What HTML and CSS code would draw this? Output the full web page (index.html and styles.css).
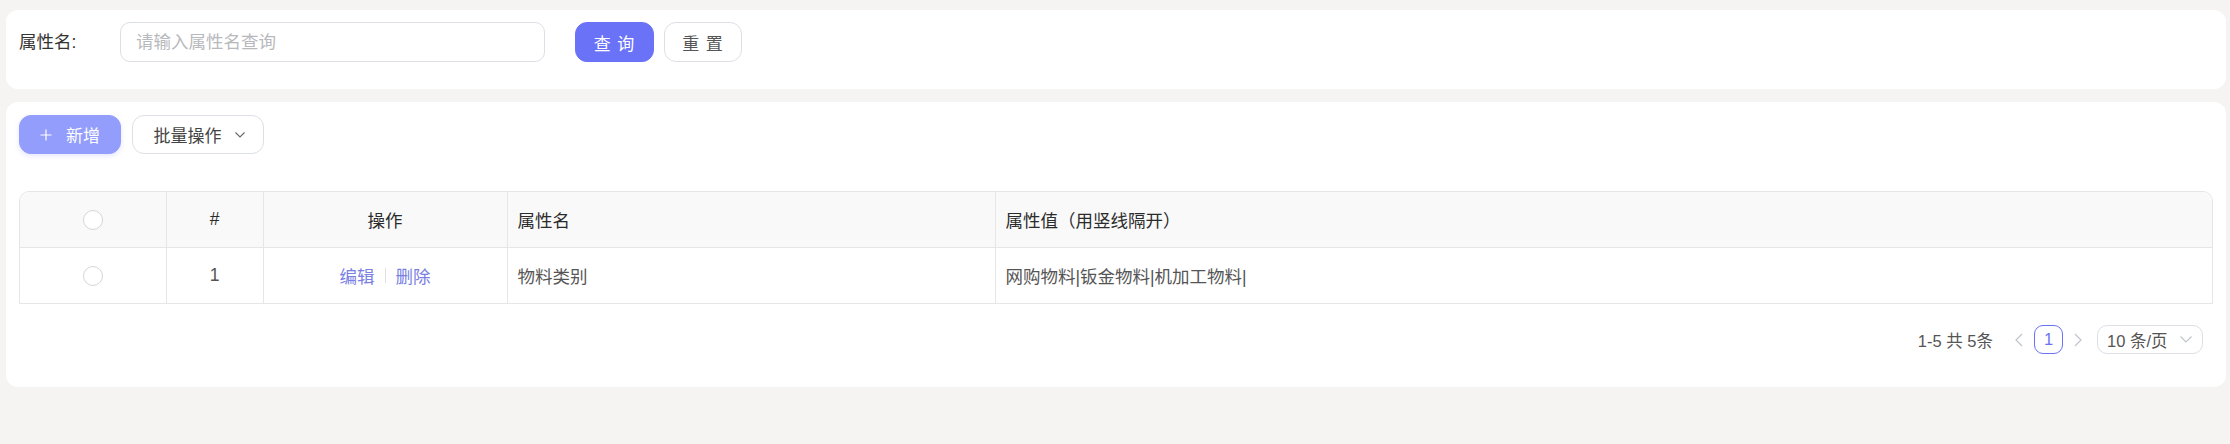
FILE: index.html
```html
<!DOCTYPE html>
<html lang="zh-CN">
<head>
<meta charset="utf-8">
<title>属性管理</title>
<link rel="stylesheet" href="styles.css">
</head>
<body>
<div class="page">
  <section class="card search-card">
    <div class="form-item">
      <label class="form-label">属性名:</label>
      <input class="text-input" type="text" placeholder="请输入属性名查询">
    </div>
    <div class="form-actions">
      <button class="btn btn-primary">查 询</button>
      <button class="btn btn-default">重 置</button>
    </div>
  </section>

  <section class="card list-card">
    <div class="toolbar">
      <button class="btn btn-add">
        <svg class="icon-plus" viewBox="0 0 12 12" width="12" height="12"><path d="M6 0.5V11.5M0.5 6H11.5" stroke="#fff" stroke-width="1.2" fill="none"/></svg>
        <span>新增</span>
      </button>
      <button class="btn btn-default btn-batch">
        <span>批量操作</span>
        <svg class="icon-chevron" viewBox="0 0 10 6" width="10" height="6"><path d="M0.5 0.5L5 5L9.5 0.5" stroke="#666" stroke-width="1.1" fill="none"/></svg>
      </button>
    </div>

    <div class="table-wrap">
      <table class="data-table">
        <colgroup>
          <col class="col-check">
          <col class="col-index">
          <col class="col-ops">
          <col class="col-name">
          <col>
        </colgroup>
        <thead>
          <tr>
            <th class="center"><span class="radio"></span></th>
            <th class="center">#</th>
            <th class="center">操作</th>
            <th>属性名</th>
            <th>属性值（用竖线隔开）</th>
          </tr>
        </thead>
        <tbody>
          <tr>
            <td class="center"><span class="radio"></span></td>
            <td class="center">1</td>
            <td class="center ops"><a class="link">编辑</a><span class="sep"></span><a class="link">删除</a></td>
            <td>物料类别</td>
            <td>网购物料|钣金物料|机加工物料|</td>
          </tr>
        </tbody>
      </table>
    </div>

    <div class="pagination">
      <span class="total">1-5 共 5条</span>
      <button class="pg-btn prev"><svg viewBox="0 0 8 14" width="8" height="14"><path d="M7 1L1 7L7 13" stroke="#c0c4cc" stroke-width="1.2" fill="none"/></svg></button>
      <span class="pager active">1</span>
      <button class="pg-btn next"><svg viewBox="0 0 8 14" width="8" height="14"><path d="M1 1L7 7L1 13" stroke="#c0c4cc" stroke-width="1.2" fill="none"/></svg></button>
      <div class="size-select">
        <span>10 条/页</span>
        <svg viewBox="0 0 12 7" width="12" height="7"><path d="M0.5 0.5L6 6L11.5 0.5" stroke="#c0c4cc" stroke-width="1.1" fill="none"/></svg>
      </div>
    </div>
  </section>
</div>
</body>
</html>
```

FILE: styles.css
```css
* { box-sizing: border-box; }

html, body {
  margin: 0;
  padding: 0;
}

body {
  background: #f5f4f2;
  font-family: "Liberation Sans", "Noto Sans CJK SC", sans-serif;
  font-size: 17.5px;
  color: #333;
  width: 2230px;
  height: 444px;
  overflow: hidden;
}

.page {
  display: flex;
  flex-direction: column;
  gap: 13px;
  padding: 10px 4px 0 6px;
}

.card {
  background: #fff;
  border-radius: 12px;
}

/* search card */
.search-card {
  display: flex;
  align-items: center;
  padding: 12px 13px 27px;
}

.form-item {
  display: flex;
  align-items: center;
}

.form-label {
  width: 101px;
  font-size: 17.5px;
  color: #333;
  line-height: 40px;
}

.text-input {
  width: 425px;
  height: 40px;
  border: 1px solid #dcdfe6;
  border-radius: 10px;
  padding: 0 15px;
  font-family: inherit;
  font-size: 17.5px;
  color: #333;
  outline: none;
  background: #fff;
}

.text-input::placeholder {
  color: #b8b9bd;
}

.form-actions {
  display: flex;
  gap: 10px;
  margin-left: 30px;
}

.btn {
  display: inline-flex;
  align-items: center;
  justify-content: center;
  height: 40px;
  border-radius: 12px;
  font-family: inherit;
  font-size: 17px;
  border: 1px solid #dcdfe6;
  background: #fff;
  color: #555;
  padding: 0;
  cursor: pointer;
}

.btn-primary {
  width: 79px;
  background: #6a72f7;
  border-color: #6a72f7;
  color: #fff;
  letter-spacing: 1px;
}

.btn-default {
  width: 78px;
  letter-spacing: 1px;
}

/* list card */
.list-card {
  padding: 13px 13px 33px;
}

.toolbar {
  display: flex;
  gap: 11px;
}

.btn-add {
  width: 102px;
  height: 39px;
  background: #939dfc;
  border-color: #939dfc;
  color: #fff;
  gap: 14px;
  box-shadow: 0 2px 5px rgba(110, 120, 240, 0.18);
}

.btn-add .icon-plus {
  width: 12px;
  height: 12px;
}

.btn-batch {
  width: 132px;
  height: 39px;
  gap: 13px;
  color: #444;
  letter-spacing: 0;
  padding-left: 2px;
}

/* table */
.table-wrap {
  margin-top: 37px;
  border: 1px solid #e6e6e6;
  border-radius: 10px 10px 0 0;
  overflow: hidden;
}

.data-table {
  width: 100%;
  border-collapse: collapse;
  table-layout: fixed;
}

.col-check { width: 146px; }
.col-index { width: 97px; }
.col-ops { width: 244px; }
.col-name { width: 488px; }

.data-table th,
.data-table td {
  border-right: 1px solid #e6e6e6;
  padding: 0 10px;
  text-align: left;
  font-size: 17.5px;
  white-space: nowrap;
}

.data-table th:last-child,
.data-table td:last-child {
  border-right: none;
}

.data-table th {
  height: 55px;
  background: #f9f9f9;
  color: #2b2b2b;
  font-weight: normal;
  border-bottom: 1px solid #e6e6e6;
}

.data-table td {
  height: 56px;
  color: #555;
}

.data-table .center {
  text-align: center;
}

.radio {
  display: inline-block;
  width: 20px;
  height: 20px;
  border: 1px solid #d6d6d6;
  border-radius: 50%;
  background: #fff;
  vertical-align: middle;
}

.ops {
  font-size: 0;
}

.link {
  color: #7a7fe3;
  font-size: 17.5px;
  vertical-align: middle;
}

.sep {
  display: inline-block;
  width: 1px;
  height: 15px;
  background: #e0e0e0;
  margin: 0 10px;
  vertical-align: middle;
}

/* pagination */
.pagination {
  display: flex;
  justify-content: flex-end;
  align-items: center;
  margin-top: 21px;
  padding-right: 10px;
  height: 29px;
  color: #555;
  font-size: 16.5px;
}

.total {
  margin-right: 11px;
}

.pg-btn {
  width: 30px;
  height: 29px;
  border: none;
  background: transparent;
  padding: 0;
  display: inline-flex;
  align-items: center;
  justify-content: center;
}

.pager {
  width: 29px;
  height: 29px;
  border: 1px solid #6a72f7;
  border-radius: 9px;
  color: #6a72f7;
  display: inline-flex;
  align-items: center;
  justify-content: center;
  font-size: 16.5px;
}

.size-select {
  margin-left: 4px;
  width: 106px;
  height: 29px;
  border: 1px solid #dcdfe6;
  border-radius: 10px;
  display: flex;
  align-items: center;
  justify-content: space-between;
  padding: 0 10px 0 9px;
  color: #555;
}
```
